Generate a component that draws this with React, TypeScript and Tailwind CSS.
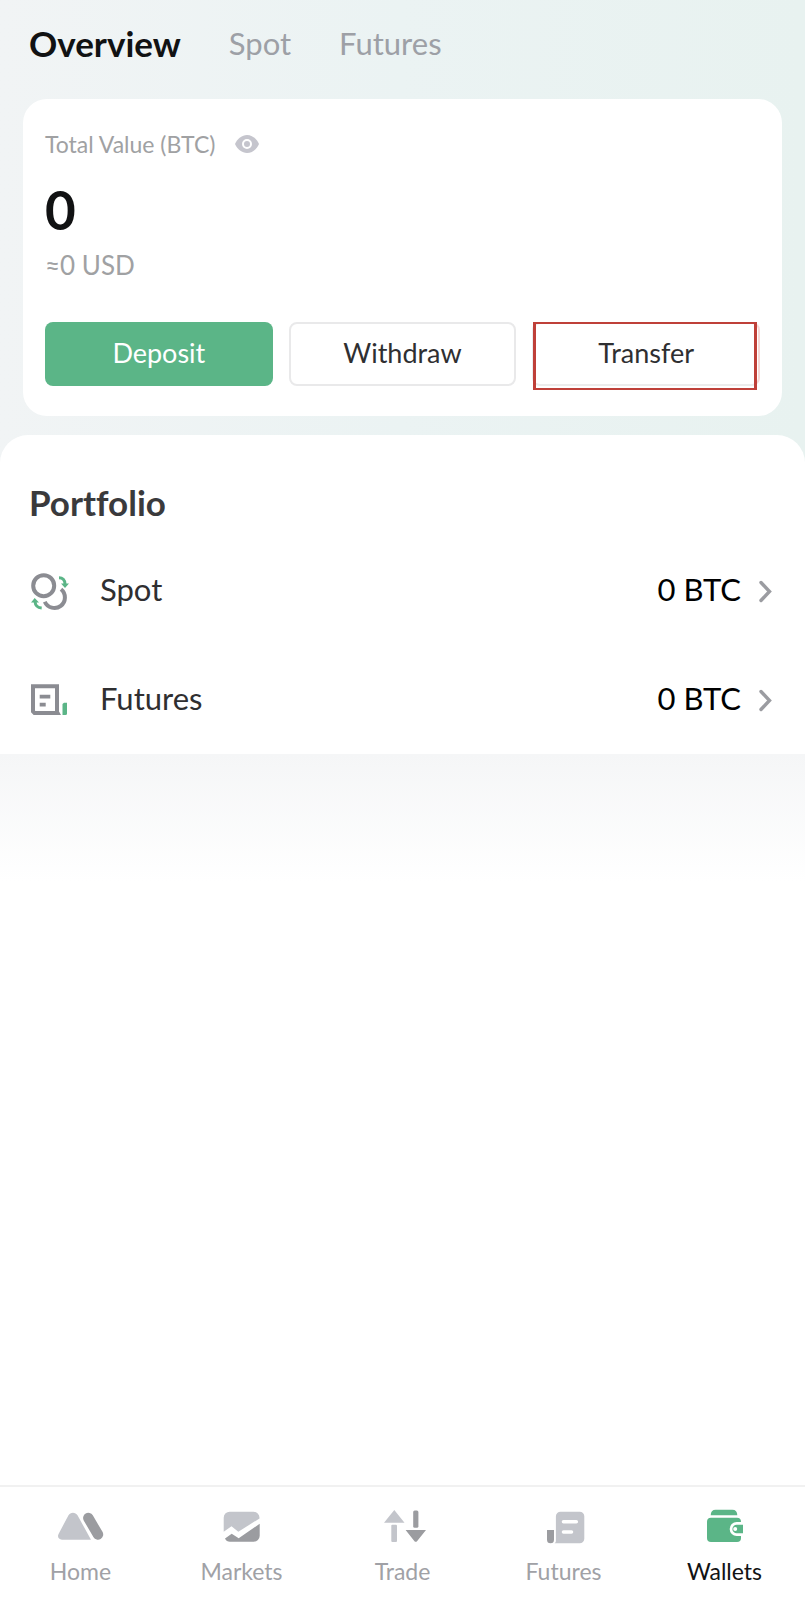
import clsx from 'clsx'
import { useState } from 'react'
import type { ReactNode } from 'react'

const tabs = ['Overview', 'Spot', 'Futures']

function EyeIcon() {
    return (
        <svg width="24" height="18" viewBox="0 0 24 18" fill="none">
            <path d="M0 9C2.500 3.500 7 0 12 0s9.500 3.500 12 9c-2.500 5.500-7 9-12 9S2.500 14.500 0 9Z" fill="#c5c5cd" />
            <circle cx="12" cy="9" r="4" stroke="#fff" strokeWidth="2" />
        </svg>
    )
}

function SpotIcon() {
    return (
        <svg width="40" height="40" viewBox="0 -1 40 40" fill="none">
            <circle cx="13.700" cy="13.700" r="10.500" stroke="#8b8c92" strokeWidth="4" />
            <path d="M31 17.300A10.500 10.500 0 1 1 14.800 29.700" stroke="#8b8c92" strokeWidth="4" />
            <path d="M29 5.700c3.500 0 6 2.300 6 6.500M11.700 36c-3.800-.3-6.400-2.300-6.700-6.500" stroke="#5bb587" strokeWidth="3" />
            <path d="M31 11.500h8l-4 4.500ZM1 30.500h8L4.700 26Z" fill="#5bb587" />
        </svg>
    )
}

function FuturesIcon() {
    return (
        <svg width="40" height="34" viewBox="0 0 40 34" fill="none">
            <path d="M3 3.300h24V30H4.500L3 28.500Z" stroke="#8b8c92" strokeWidth="4" />
            <path d="M27 28.500h2l2 3.500h-4Z" fill="#8b8c92" />
            <path d="M9.700 13.700h10.600M9.700 21.700h6" stroke="#8b8c92" strokeWidth="3.800" />
            <path d="M32.500 21 34 19.700h3V30.500a1.500 1.500 0 0 1-1.500 1.500h-3Z" fill="#5bb587" />
        </svg>
    )
}

function ChevronIcon() {
    return (
        <svg width="16" height="24" viewBox="0 0 16 24" fill="none">
            <path d="m2 3.500 8.500 9-8.500 9" stroke="#9b9ca1" strokeWidth="3.400" strokeLinecap="round" />
        </svg>
    )
}

function HomeNavIcon() {
    return (
        <svg width="48" height="36" viewBox="1 -2 48 36">
            <path
                d="M12.500 5.200c1.800-3.400 7-3.400 9 0L35 29.700H6c-3.400 0-5-3-3.300-6Z"
                fill="#c3c5cb"
            />
            <path d="m32.300 8 9.700 16.500" stroke="#9b9ca0" strokeWidth="10.400" strokeLinecap="round" />
        </svg>
    )
}

function MarketsNavIcon() {
    return (
        <svg width="40" height="36" viewBox="0 -2 40 36" fill="none">
            <path
                d="M8 1.700h23.500a6 6 0 0 1 6 6v.7L16.300 21.800l-6.800-5.600-7.800 5.500V7.700a6 6 0 0 1 6.300-6Z"
                fill="#c3c5cb"
            />
            <path
                d="m3 28.500 6.700-4.700 7 4.500 21-14.500v11.900a6 6 0 0 1-6 6H8c-2.300 0-4-1-5-3.200Z"
                fill="#9b9ca0"
            />
        </svg>
    )
}

function TradeNavIcon() {
    return (
        <svg width="46" height="36" viewBox="-2 0 46 36">
            <path d="M12.300 2 22.500 14.700H2Z" fill="#c3c5cb" />
            <rect x="9.300" y="16.700" width="5.700" height="17.300" rx="1" fill="#c3c5cb" />
            <rect x="31.200" y="2.500" width="5.200" height="17.300" rx="1.500" fill="#9b9ca0" />
            <path d="M23.600 22H44L35 33.200a1.500 1.500 0 0 1-2.500 0Z" fill="#9b9ca0" />
        </svg>
    )
}

function FuturesNavIcon() {
    return (
        <svg width="40" height="36" viewBox="-2 -2 40 36" overflow="visible">
            <path
                d="M14.700 1.700h19a4.600 4.600 0 0 1 4.600 4.600v22.400a4.600 4.600 0 0 1-4.600 4.600H8.500c1-.6 1.400-1.300 1.400-2.500V6.300a4.600 4.600 0 0 1 4.800-4.600Z"
                fill="#c3c5cb"
            />
            <path d="M1 20h7v9.800a3.500 3.500 0 0 1-7 0Z" fill="#9b9ca0" />
            <path d="M17.500 11.700h12.800M17.500 22h8" stroke="#fff" strokeWidth="3.600" strokeLinecap="round" />
        </svg>
    )
}

function WalletsNavIcon() {
    return (
        <svg width="40" height="36" viewBox="-1 0 40 36">
            <path d="M4.700 7.300c0-3.700 1.600-5.600 5-5.600h16.600c3.400 0 5 1.900 5 5.600Z" fill="#5bb587" />
            <rect x="1" y="9.700" width="34" height="24.300" rx="4" fill="#5bb587" />
            <path d="M38 14h-7.300a7 7 0 0 0 0 14H38Z" fill="#fff" />
            <path d="M37 16.700h-6.300a4.300 4.300 0 0 0 0 8.600H37Z" fill="#5bb587" />
            <circle cx="29.200" cy="21" r="2" fill="#fff" />
        </svg>
    )
}

interface PortfolioRowProps {
    icon: ReactNode
    name: string
    value: string
}

function PortfolioRow({ icon, name, value }: PortfolioRowProps) {
    return (
        <li>
            <a href="#" className="flex h-[109px] items-center px-[30px]">
                {icon}
                <span className="ml-[30px] pb-1 text-[31px] leading-9 text-[#2f2f31]">{name}</span>
                <span className="mr-[18px] ml-auto pb-1 text-[31px] leading-9 text-black">{value}</span>
                <ChevronIcon />
            </a>
        </li>
    )
}

const navItems = [
    { name: 'Home', icon: <HomeNavIcon /> },
    { name: 'Markets', icon: <MarketsNavIcon /> },
    { name: 'Trade', icon: <TradeNavIcon /> },
    { name: 'Futures', icon: <FuturesNavIcon /> },
    { name: 'Wallets', icon: <WalletsNavIcon />, active: true },
]

export default function App() {
    const [activeTab, setActiveTab] = useState('Overview')

    return (
        <div className="flex min-h-screen flex-col bg-white font-['Lato',sans-serif] [font-variant-ligatures:none]">
            <div className="bg-linear-to-r from-[#f1f4f5] via-[#ebf3f3] to-[#e8f2f0]">
                <header className="flex h-[99px] items-center gap-12 px-[29px] pb-[13px]">
                    {tabs.map((tab) => (
                        <button
                            key={tab}
                            type="button"
                            onClick={() => setActiveTab(tab)}
                            className={clsx(
                                'cursor-pointer leading-10',
                                tab === activeTab ? 'text-[35px] font-bold text-[#111213]' : 'text-[31px] text-[#9da0a6]'
                            )}
                        >
                            {tab}
                        </button>
                    ))}
                </header>

                <section className="mx-[23px] rounded-3xl bg-white px-[22px] pt-[29px] pb-[30px]">
                    <div className="flex items-center gap-5">
                        <h2 className="text-[23px] leading-8 text-[#a0a1a3]">Total Value (BTC)</h2>
                        <button type="button" aria-label="Hide balance" className="cursor-pointer">
                            <EyeIcon />
                        </button>
                    </div>
                    <p className="mt-[18px] text-[53px] leading-16 font-bold text-[#111213]">0</p>
                    <p className="mt-[5px] text-[26px] leading-9 text-[#a0a1a3]">≈0 USD</p>

                    <div className="mt-[39px] grid grid-cols-3 gap-4">
                        <button type="button" className="h-16 cursor-pointer rounded-lg bg-[#5bb587] pb-0.5 text-[27px] text-white">
                            Deposit
                        </button>
                        <button
                            type="button"
                            className="h-16 cursor-pointer rounded-lg border-2 border-[#e9e9ea] pb-0.5 text-[27px] text-[#2f2f31]"
                        >
                            Withdraw
                        </button>
                        <div className="relative">
                            <button
                                type="button"
                                className="h-16 w-full cursor-pointer rounded-lg border-2 border-[#ececec] border-r-[#f7d9d7] pb-0.5 text-[27px] text-[#2f2f31]"
                            >
                                Transfer
                            </button>
                            <div className="pointer-events-none absolute top-0 right-[3px] -bottom-1 left-[1px] border-x-3 border-y-2 border-[#bf4039]" />
                        </div>
                    </div>
                </section>

                <section className="mt-[19px] rounded-t-[28px] bg-white">
                    <h2 className="px-[29px] pt-[47px] pb-[14px] text-[35px] leading-10 font-bold text-[#3a3a3c]">Portfolio</h2>
                    <ul>
                        <PortfolioRow icon={<SpotIcon />} name="Spot" value="0 BTC" />
                        <PortfolioRow icon={<FuturesIcon />} name="Futures" value="0 BTC" />
                    </ul>
                </section>
            </div>

            <div className="h-32 bg-linear-to-b from-[#f5f6f7] to-white" />

            <nav className="mt-auto grid h-[115px] grid-cols-5 border-t-2 border-[#f1f1f1]">
                {navItems.map((item) => (
                    <a
                        key={item.name}
                        href="#"
                        className={clsx(
                            'flex flex-col items-center gap-[11px] pt-[21px] text-[23px] leading-8',
                            item.active ? 'text-[#111213]' : 'text-[#a0a1a6]'
                        )}
                    >
                        {item.icon}
                        {item.name}
                    </a>
                ))}
            </nav>
        </div>
    )
}
